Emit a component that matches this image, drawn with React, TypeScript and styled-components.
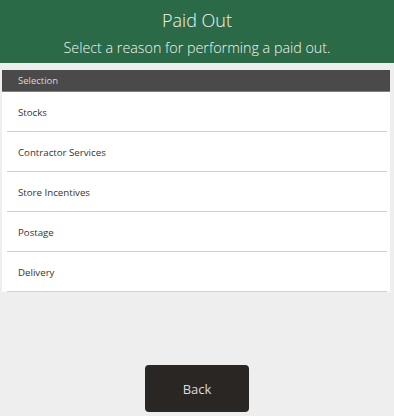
import { createGlobalStyle } from 'styled-components';
import styled from 'styled-components';

const GlobalStyle = createGlobalStyle`
  html, body {
    margin: 0;
    padding: 0;
    height: 100%;
  }
  body {
    background: #eeeeee;
    font-family: "Open Sans", "Liberation Sans", sans-serif;
  }
  #root {
    height: 100%;
  }
`;

const Page = styled.div`
  height: 416px;
  display: flex;
  flex-direction: column;
  background: #eeeeee;
`;

const Header = styled.header`
  height: 63px;
  background: #2b6a47;
  color: #f4f4f4;
  display: flex;
  flex-direction: column;
  align-items: center;
  box-sizing: border-box;
  padding-top: 8px;
`;

const Title = styled.h1`
  margin: 0;
  font-size: 18px;
  font-weight: 300;
  line-height: 24px;
`;

const Subtitle = styled.p`
  margin: 6px 0 0;
  font-size: 14.3px;
  font-weight: 300;
  line-height: 20px;
`;

const Panel = styled.section`
  margin: 7px 4px 0 2px;
  display: flex;
  flex-direction: column;
`;

const SelectionBar = styled.div`
  height: 22px;
  background: #4a4a4a;
  border-bottom: 1px solid #6d8a80;
  box-sizing: border-box;
  color: #d8d8d8;
  font-size: 9.5px;
  line-height: 22px;
  padding-left: 16px;
`;

const List = styled.ul`
  list-style: none;
  margin: 0;
  padding: 0;
  background: #ffffff;
`;

const Row = styled.li`
  margin: 0 3px 0 5px;
  height: 40px;
  box-sizing: border-box;
  border-bottom: 1px solid #d0d0d0;
  display: flex;
  align-items: center;
  padding: 2px 0 0 11px;
  color: #333333;
  font-size: 9.7px;
`;

const Footer = styled.div`
  flex: 1;
  display: flex;
  align-items: flex-end;
  justify-content: center;
  padding-bottom: 4px;
`;

const BackButton = styled.button`
  width: 104px;
  height: 47px;
  border: none;
  border-radius: 4px;
  background: #2a2624;
  color: #dcdcdc;
  font-family: "Open Sans", "Liberation Sans", sans-serif;
  font-size: 13px;
  cursor: pointer;
`;

const reasons = ['Stocks', 'Contractor Services', 'Store Incentives', 'Postage', 'Delivery'];

export default function App() {
  return (
    <>
      <GlobalStyle />
      <Page>
        <Header>
          <Title>Paid Out</Title>
          <Subtitle>Select a reason for performing a paid out.</Subtitle>
        </Header>
        <Panel>
          <SelectionBar>Selection</SelectionBar>
          <List>
            {reasons.map((r) => (
              <Row key={r}>{r}</Row>
            ))}
          </List>
        </Panel>
        <Footer>
          <BackButton type="button">Back</BackButton>
        </Footer>
      </Page>
    </>
  );
}
